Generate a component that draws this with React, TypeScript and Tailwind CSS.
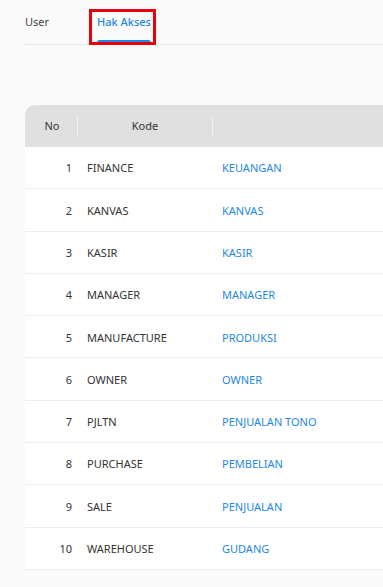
const rows: [number, string, string][] = [
  [1, "FINANCE", "KEUANGAN"],
  [2, "KANVAS", "KANVAS"],
  [3, "KASIR", "KASIR"],
  [4, "MANAGER", "MANAGER"],
  [5, "MANUFACTURE", "PRODUKSI"],
  [6, "OWNER", "OWNER"],
  [7, "PJLTN", "PENJUALAN TONO"],
  [8, "PURCHASE", "PEMBELIAN"],
  [9, "SALE", "PENJUALAN"],
  [10, "WAREHOUSE", "GUDANG"],
];

const App = () => {
  return (
    <div className="min-h-[587px] w-[383px] overflow-hidden bg-[#fafafa] font-['Noto_Sans',sans-serif] text-[11px] text-[#333]">
      <div className="ml-[25px] flex h-[45px] items-stretch border-b border-[#e6e6e6]">
        <div className="flex items-center pt-[1px] text-[11px] text-[#444]">User</div>
        <div className="relative ml-[48px] flex flex-col items-stretch">
          <span className="flex flex-1 items-center pt-[5px] text-[11px] font-medium text-[#1e88e5]">Hak Akses</span>
          <div className="h-[4px] rounded-t-[3px] bg-[#1e88e5]" />
          <div className="absolute -left-[8px] -right-[5px] top-[9px] -bottom-[1px] border-[3px] border-[#e8000b]" />
        </div>
      </div>

      <div className="ml-[25px] mt-[60px] overflow-hidden rounded-tl-[10px]">
        <div className="flex h-[42px] items-center bg-[#e0e0e0] text-[#333]">
          <div className="flex h-[20px] w-[53px] items-center justify-center border-r border-[#f2f2f2] pl-[2px]">No</div>
          <div className="flex h-[20px] w-[135px] items-center justify-center border-r border-[#f2f2f2]">Kode</div>
          <div className="flex-1" />
        </div>
        {rows.map(([no, kode, nama]) => (
          <div key={no} className="flex h-[42.3px] items-center border-b border-[#eeeeee] bg-white pt-[2px]">
            <div className="w-[47px] text-right">{no}</div>
            <div className="ml-[15px] w-[135px]">{kode}</div>
            <div className="text-[#1e88e5]">{nama}</div>
          </div>
        ))}
      </div>
    </div>
  );
};

export default App;
